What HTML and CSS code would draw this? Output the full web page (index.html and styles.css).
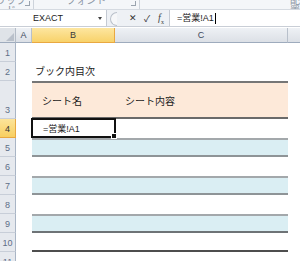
FILE: index.html
```html
<!DOCTYPE html>
<html lang="ja">
<head>
  <meta charset="UTF-8" />
  <title>ブック内目次</title>
  <link rel="stylesheet" href="styles.css">
</head>
<body>
  <div class="ribbon">
    <div class="grp g1"><span class="lbl">クリップボード</span><i class="launch"></i></div>
    <div class="grp g2"><span class="lbl">フォント</span><i class="launch"></i></div>
    <div class="grp g3"><span class="lbl">配置</span></div>
  </div>

  <div class="fbar">
    <div class="namebox"><span class="name">EXACT</span><span class="drop"></span></div>
    <div class="grip"></div>
    <div class="btns">
      <span class="btn">✕</span>
      <span class="btn">✓</span>
      <span class="btn fx"><i>f</i><sub>x</sub></span>
    </div>
    <div class="formula">=営業!A1<span class="caret"></span></div>
  </div>

  <div class="sheet">
    <div class="row head">
      <div class="corner"><span class="tri"></span></div>
      <div class="ch">A</div>
      <div class="ch sel">B</div>
      <div class="ch">C</div>
      <div class="ch last"></div>
    </div>
    <div class="row"><div class="rh">1</div><div></div><div></div><div></div><div></div></div>
    <div class="row"><div class="rh">2</div><div></div><div class="title">ブック内目次</div><div></div><div></div></div>
    <div class="row tall"><div class="rh">3</div><div></div><div class="th">シート名</div><div class="th">シート内容</div><div></div></div>
    <div class="row"><div class="rh sel">4</div><div></div><div class="active">=営業!A1<span class="handle"></span></div><div></div><div></div></div>
    <div class="row"><div class="rh">5</div><div></div><div class="band"></div><div class="band"></div><div></div></div>
    <div class="row"><div class="rh">6</div><div></div><div></div><div></div><div></div></div>
    <div class="row"><div class="rh">7</div><div></div><div class="band"></div><div class="band"></div><div></div></div>
    <div class="row"><div class="rh">8</div><div></div><div></div><div></div><div></div></div>
    <div class="row"><div class="rh">9</div><div></div><div class="band dark"></div><div class="band dark"></div><div></div></div>
    <div class="row"><div class="rh">10</div><div></div><div class="end"></div><div class="end"></div><div></div></div>
    <div class="row"><div class="rh">11</div><div></div><div></div><div></div><div></div></div>
  </div>
</body>
</html>
```

FILE: styles.css
```css
body {
  margin: 0;
  background: #fff;
  font-family: 'Liberation Sans', 'Noto Sans CJK JP', sans-serif;
  color: #222;
  overflow: hidden;
}
.ribbon {
  display: flex;
  height: 9px;
  background: #f4f6f9;
  border-bottom: 1px solid #d5dae1;
  overflow: hidden;
}
.grp {
  position: relative;
  border-right: 1px solid #cdd3db;
  display: flex;
  justify-content: center;
}
.g1 { width: 50px; }
.g2 { width: 162px; }
.g3 { flex: 1; border-right: none; }
.lbl {
  font-size: 10px;
  line-height: 10px;
  margin-top: -4px;
  color: #8a94a3;
}
.g1 .lbl { margin-left: -14px; }
.g3 .lbl { margin-left: 150px; }
.launch {
  position: absolute;
  right: 3px;
  top: 1px;
  width: 4px;
  height: 4px;
  border-right: 1px solid #9aa3ae;
  border-bottom: 1px solid #9aa3ae;
}
.fbar {
  display: flex;
  height: 16px;
  background: #eef1f5;
  border-bottom: 1px solid #c9ced6;
}
.namebox {
  width: 106px;
  background: #fff;
  border-right: 1px solid #c4cad3;
  display: flex;
  align-items: center;
  position: relative;
}
.name {
  font-size: 9px;
  margin-left: 33px;
  color: #222;
}
.drop {
  position: absolute;
  right: 4px;
  top: 7px;
  border-left: 2px solid transparent;
  border-right: 2px solid transparent;
  border-top: 3px solid #444;
}
.grip {
  width: 6px;
  height: 12px;
  margin: 2px 0 0 3px;
  border: 1px solid #b9c0ca;
  border-right: none;
  border-radius: 7px 0 0 7px;
  background: #f6f7f9;
}
.btns {
  display: flex;
  align-items: center;
  width: 52px;
}
.btn {
  width: 14px;
  text-align: center;
  font-size: 9px;
  color: #333;
}
.btns .btn:first-child { margin-left: 9px; }
.fx {
  font-family: 'Liberation Serif', serif;
  font-size: 10px;
  color: #444;
}
.fx sub { font-size: 6px; }
.formula {
  flex: 1;
  background: #fff;
  border-left: 1px solid #c4cad3;
  font-size: 9px;
  line-height: 16px;
  padding-left: 7px;
  display: flex;
  align-items: center;
}
.caret {
  width: 1px;
  height: 11px;
  background: #000;
  margin-left: 1px;
}
.sheet {
  margin-top: 1px;
}
.row {
  display: grid;
  grid-template-columns: 16px 16px 83px 173px 1fr;
  height: 19px;
}
.row > div {
  box-sizing: border-box;
}
.head {
  height: 15px;
}
.corner {
  background: #dfe3e8;
  border-right: 1px solid #b4bcc7;
  border-bottom: 1px solid #9eabbd;
  position: relative;
}
.tri {
  position: absolute;
  right: 1px;
  bottom: 1px;
  border-left: 8px solid transparent;
  border-bottom: 8px solid #b9c0ca;
}
.ch {
  background: linear-gradient(#eef1f5, #dce0e6);
  border-right: 1px solid #b8c0cb;
  border-bottom: 1px solid #9eabbd;
  font-size: 9px;
  line-height: 14px;
  text-align: center;
  color: #3d4a5c;
}
.ch.sel {
  background: linear-gradient(#fde6a0, #f8d26a);
  border-right: 1px solid #e9a841;
  border-bottom: 1px solid #e9a841;
  color: #3a3a3a;
}
.ch.last { border-right: none; }
.rh {
  background: #e6e9ee;
  border-right: 1px solid #a9b5c5;
  border-bottom: 1px solid #c8ced8;
  font-size: 9px;
  color: #5d6e88;
  display: flex;
  align-items: flex-end;
  justify-content: center;
  padding-bottom: 3px;
}
.rh.sel {
  background: linear-gradient(#fce49a, #f8cf61);
  border-right: 1px solid #e9a841;
  border-bottom: 1px solid #e9a841;
  color: #333;
}
.tall {
  height: 38px;
}
.title {
  font-size: 10px;
  display: flex;
  align-items: flex-end;
  padding: 0 0 3px 3px;
}
.th {
  background: #fde9d9;
  border-top: 2px solid #767676;
  border-bottom: 2px solid #6a6a6a;
  font-size: 10px;
  display: flex;
  align-items: center;
  padding-left: 10px;
}
.active {
  border: 2px solid #111;
  font-size: 9px;
  display: flex;
  align-items: center;
  padding-left: 10px;
  position: relative;
  margin: -1px -1px 0 -1px;
  height: 20px;
}
.handle {
  position: absolute;
  right: -3px;
  bottom: -3px;
  width: 4px;
  height: 4px;
  background: #111;
  border: 1px solid #fff;
}
.band {
  background: #daeef3;
  border-top: 2px solid #a3a8ab;
  border-bottom: 2px solid #8e9497;
}
.band.dark {
  border-bottom-color: #6e7376;
}
.end {
  border-bottom: 2px solid #4e4e4e;
}
```
